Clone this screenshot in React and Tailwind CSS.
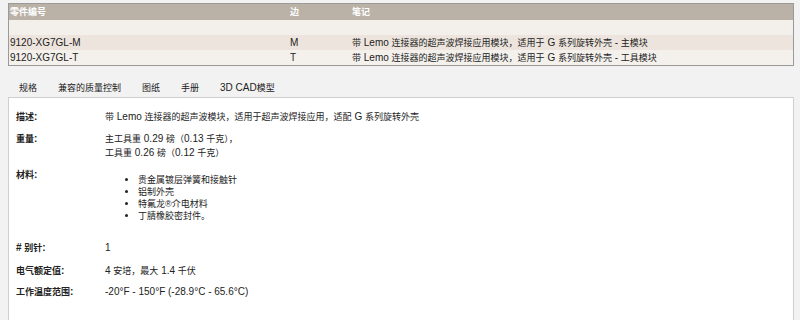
import React from "react";

const font = {
  fontFamily: '"Liberation Sans", "Noto Sans CJK SC", sans-serif',
};

// CJK glyphs in the reference run a bit smaller than the Latin text
const T = ({ children }) =>
  String(children)
    .split(/([\u3000-\u303f\u4e00-\u9fff\uff00-\uffef®]+)/)
    .map((s, i) =>
      i % 2 ? (
        <span key={i} className="text-[9px]">
          {s}
        </span>
      ) : (
        s
      )
    );

const parts = [
  { no: "9120-XG7GL-M", side: "M", note: "带 Lemo 连接器的超声波焊接应用模块，适用于 G 系列旋转外壳 - 主模块", bg: "bg-[#ede5dd]" },
  { no: "9120-XG7GL-T", side: "T", note: "带 Lemo 连接器的超声波焊接应用模块，适用于 G 系列旋转外壳 - 工具模块", bg: "bg-[#f4f1ed]" },
];

const tabs = ["规格", "兼容的质量控制", "图纸", "手册", "3D CAD模型"];

const Row = ({ label, children, className = "" }) => (
  <div className={`flex ${className}`}>
    <div className="w-[89px] shrink-0 font-bold">
      <T>{label}</T>
    </div>
    <div>{children}</div>
  </div>
);

const App = () => {
  return (
    <div className="w-[800px] h-[320px] overflow-hidden bg-[#f2f2f2] text-[10px] text-[#222] leading-[14px]" style={font}>
      {/* Parts table */}
      <div className="mx-2 mt-[3px] w-[786px] border border-[#9c9a98]">
        <div className="flex h-[16px] items-center bg-[#bab2a7] font-bold text-white">
          <div className="w-[277px] pl-[1px]"><T>零件编号</T></div>
          <div className="w-[66px] pl-[4px]"><T>边</T></div>
          <div className="flex-1"><T>笔记</T></div>
        </div>
        <div className="h-[15px] bg-[#f3f0eb]" />
        {parts.map((p) => (
          <div key={p.no} className={`flex h-[15px] items-center ${p.bg}`}>
            <div className="w-[277px] pl-[1px]">{p.no}</div>
            <div className="w-[66px] pl-[4px]">{p.side}</div>
            <div className="flex-1"><T>{p.note}</T></div>
          </div>
        ))}
      </div>

      {/* Tabs */}
      <div className="ml-[19px] mt-[15px] flex h-[14px] items-center gap-[21px]">
        {tabs.map((t) => (
          <span key={t}><T>{t}</T></span>
        ))}
      </div>

      {/* Spec panel */}
      <div className="mx-2 mt-[2px] h-[240px] w-[786px] border border-[#cfcfcf] bg-white pl-[7px] pt-[12px]">
        <Row label="描述:"><T>带 Lemo 连接器的超声波模块，适用于超声波焊接应用，适配 G 系列旋转外壳</T></Row>
        <Row label="重量:" className="mt-[8px]">
          <div className="leading-[13px]"><T>主工具重 0.29 磅（0.13 千克），</T></div>
          <div className="leading-[13px]"><T>工具重 0.26 磅（0.12 千克）</T></div>
        </Row>
        <Row label="材料:" className="mt-[8px]">
          <ul className="ml-[22px] mt-[6px] list-disc pl-[11px] leading-[12px]">
            <li><T>贵金属镀层弹簧和接触针</T></li>
            <li><T>铝制外壳</T></li>
            <li><T>特氟龙®介电材料</T></li>
            <li><T>丁腈橡胶密封件。</T></li>
          </ul>
        </Row>
        <Row label="# 别针:" className="mt-[19px]">1</Row>
        <Row label="电气额定值:" className="mt-[9px]"><T>4 安培，最大 1.4 千伏</T></Row>
        <Row label="工作温度范围:" className="mt-[7px]">-20°F - 150°F (-28.9°C - 65.6°C)</Row>
      </div>
    </div>
  );
};

export default App;
